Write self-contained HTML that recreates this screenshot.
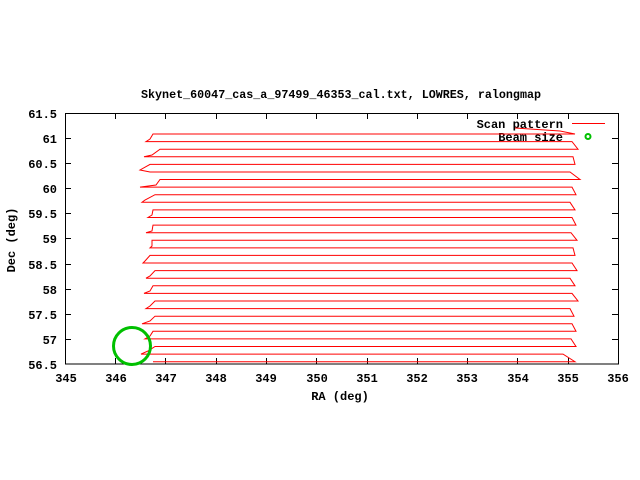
<!DOCTYPE html>
<html><head><meta charset="utf-8"><style>
html,body{margin:0;padding:0;background:#fff;width:640px;height:480px;overflow:hidden}
text{font-family:"Liberation Mono",monospace;font-weight:bold;font-size:12px;fill:#000}
</style></head><body>
<svg width="640" height="480" xmlns="http://www.w3.org/2000/svg">
<rect x="65.5" y="113.5" width="553" height="250.5" fill="none" stroke="#000" stroke-width="1"/>
<g stroke="#000" stroke-width="1">
<path d="M65,113.5h6M65,138.5h6M65,163.5h6M65,188.5h6M65,213.5h6M65,238.5h6M65,264.5h6M65,289.5h6M65,314.5h6M65,339.5h6M612,138.5h6M612,163.5h6M612,188.5h6M612,213.5h6M612,238.5h6M612,264.5h6M612,289.5h6M612,314.5h6M612,339.5h6"/>
<path d="M115.5,364v-6M165.5,364v-6M216.5,364v-6M266.5,364v-6M316.5,364v-6M367.5,364v-6M417.5,364v-6M467.5,364v-6M517.5,364v-6M568.5,364v-6M115.5,113v6M165.5,113v6M216.5,113v6M266.5,113v6M316.5,113v6M367.5,113v6M417.5,113v6M467.5,113v6M517.5,113v6M568.5,113v6"/>
</g>
<g text-anchor="end">
<text x="57" y="118">61.5</text><text x="57" y="143">61</text><text x="57" y="168">60.5</text><text x="57" y="193">60</text><text x="57" y="218">59.5</text><text x="57" y="243">59</text><text x="57" y="269">58.5</text><text x="57" y="294">58</text><text x="57" y="319">57.5</text><text x="57" y="344">57</text><text x="57" y="369">56.5</text>
</g>
<g text-anchor="middle">
<text x="66" y="382">345</text><text x="116" y="382">346</text><text x="166" y="382">347</text><text x="216" y="382">348</text><text x="266" y="382">349</text><text x="317" y="382">350</text><text x="367" y="382">351</text><text x="417" y="382">352</text><text x="467" y="382">353</text><text x="518" y="382">354</text><text x="568" y="382">355</text><text x="618" y="382">356</text>
<text x="340" y="400">RA (deg)</text>
<text x="341" y="98" textLength="400" lengthAdjust="spacingAndGlyphs">Skynet_60047_cas_a_97499_46353_cal.txt, LOWRES, ralongmap</text>
<text transform="translate(15,240) rotate(-90)">Dec (deg)</text>
</g>
<text x="563" y="128" text-anchor="end">Scan pattern</text>
<text x="563" y="141" text-anchor="end">Beam size</text>
<line x1="572" y1="123.5" x2="605" y2="123.5" stroke="#f00"/>
<circle cx="588" cy="136.5" r="2.5" fill="none" stroke="#00c000" stroke-width="2"/>
<polyline fill="none" stroke="#f00" stroke-width="1" points="515,128 560,131 575,134 570,134 153,134 150,139 146,141.6 572,141.6 578,149.2 160,149.2 152,155 144,156.8 573,156.8 575,164.4 150,164.4 140,170 150,172 570,172 580,179.5 160,179.5 156,185 140,187.1 572,187.1 576,194.7 155,194.7 145,200 142,202.3 570,202.3 575,209.9 153,209.9 152,215 148,217.5 572,217.5 576,225.1 153,225.1 152,231 146,232.7 571,232.7 577,240.3 152,240.3 152,246 150,247.9 573,247.9 575,255.4 150,255.4 145,261 143,263 572,263 577,270.6 155,270.6 150,276 146,278.2 570,278.2 575,285.8 153,285.8 150,291 144,293.4 572,293.4 578,301 155,301 150,306 146,308.6 570,308.6 574,316.2 155,316.2 150,321 142,323.8 572,323.8 576,331.3 153,331.3 150,336 145,338.9 571,338.9 576,346.5 155,346.5 148,351 141,354.1 549,354.1 563,354.1 575,361.7 153,361.7"/>
<circle cx="132" cy="346" r="18.5" fill="none" stroke="#00c000" stroke-width="3"/>
</svg>
</body></html>
